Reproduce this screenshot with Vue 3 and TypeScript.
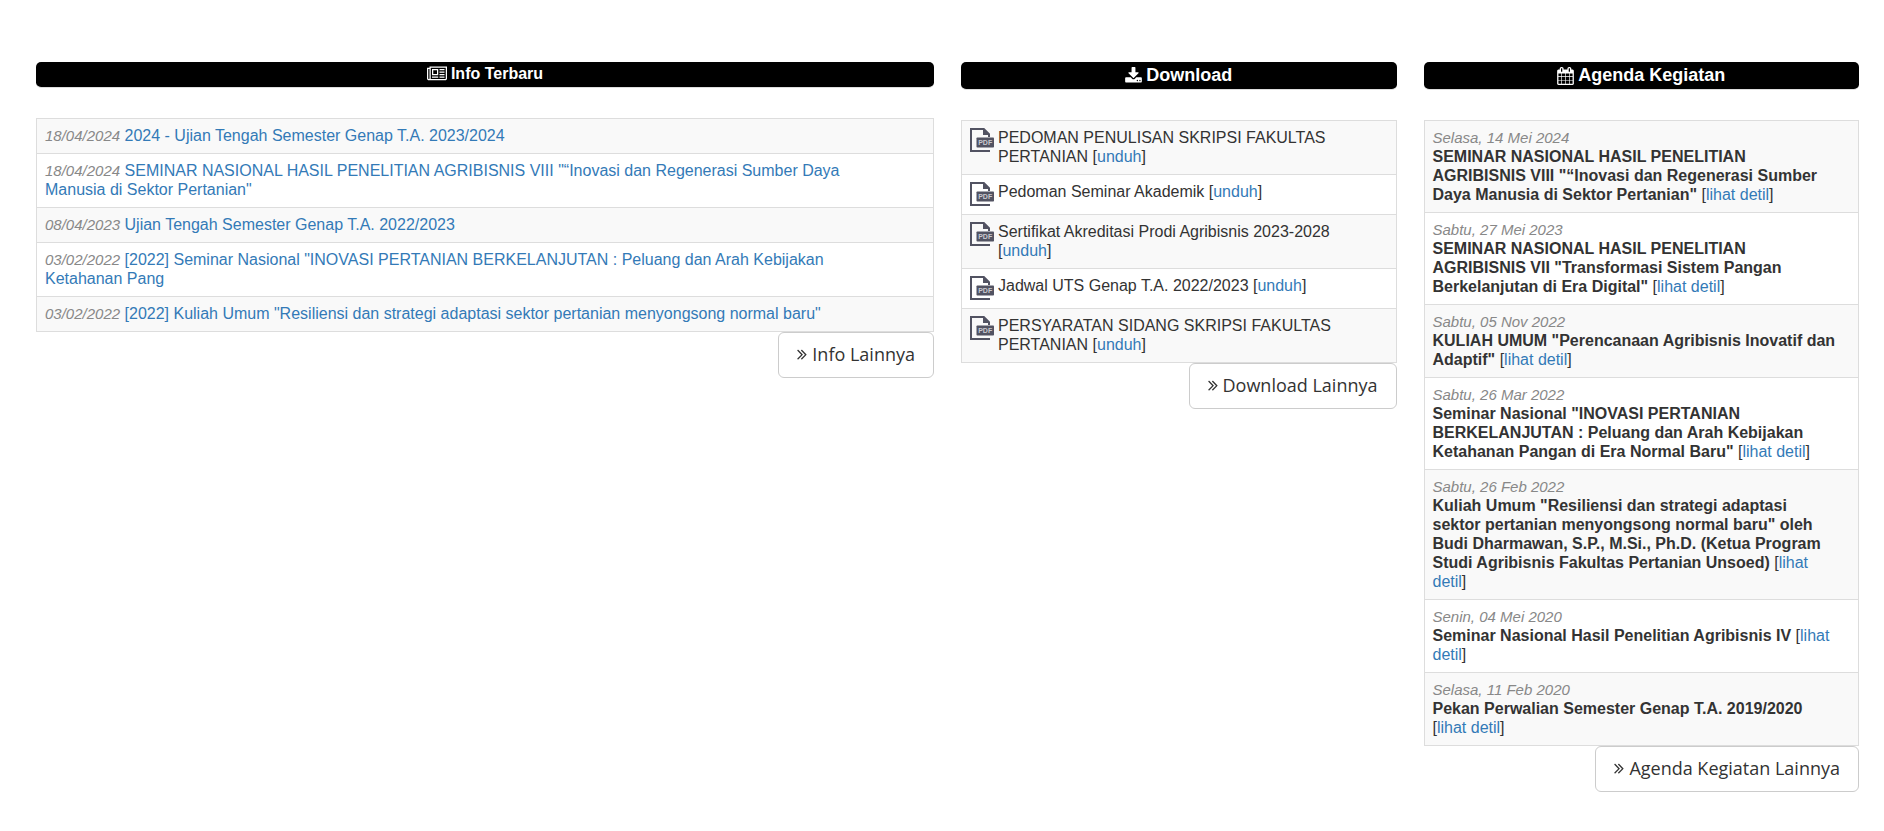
<script setup lang="ts">
interface InfoItem {
  date: string
  title: string
}

interface AgendaItem {
  date: string
  title: string
  link: string
}

const infoItems: InfoItem[] = [
  { date: '18/04/2024', title: '2024 - Ujian Tengah Semester Genap T.A. 2023/2024' },
  {
    date: '18/04/2024',
    title:
      'SEMINAR NASIONAL HASIL PENELITIAN AGRIBISNIS VIII "“Inovasi dan Regenerasi Sumber Daya\nManusia di Sektor Pertanian"',
  },
  { date: '08/04/2023', title: 'Ujian Tengah Semester Genap T.A. 2022/2023' },
  {
    date: '03/02/2022',
    title:
      '[2022] Seminar Nasional "INOVASI PERTANIAN BERKELANJUTAN : Peluang dan Arah Kebijakan\nKetahanan Pang',
  },
  {
    date: '03/02/2022',
    title:
      '[2022] Kuliah Umum "Resiliensi dan strategi adaptasi sektor pertanian menyongsong normal baru"',
  },
]

const downloads: string[] = [
  'PEDOMAN PENULISAN SKRIPSI FAKULTAS PERTANIAN',
  'Pedoman Seminar Akademik',
  'Sertifikat Akreditasi Prodi Agribisnis 2023-2028',
  'Jadwal UTS Genap T.A. 2022/2023',
  'PERSYARATAN SIDANG SKRIPSI FAKULTAS PERTANIAN',
]

const agenda: AgendaItem[] = [
  {
    date: 'Selasa, 14 Mei 2024',
    title:
      'SEMINAR NASIONAL HASIL PENELITIAN\nAGRIBISNIS VIII "“Inovasi dan Regenerasi Sumber\nDaya Manusia di Sektor Pertanian"',
    link: 'lihat detil',
  },
  {
    date: 'Sabtu, 27 Mei 2023',
    title:
      'SEMINAR NASIONAL HASIL PENELITIAN\nAGRIBISNIS VII "Transformasi Sistem Pangan\nBerkelanjutan di Era Digital"',
    link: 'lihat detil',
  },
  {
    date: 'Sabtu, 05 Nov 2022',
    title: 'KULIAH UMUM "Perencanaan Agribisnis Inovatif dan\nAdaptif"',
    link: 'lihat detil',
  },
  {
    date: 'Sabtu, 26 Mar 2022',
    title:
      'Seminar Nasional "INOVASI PERTANIAN\nBERKELANJUTAN : Peluang dan Arah Kebijakan\nKetahanan Pangan di Era Normal Baru"',
    link: 'lihat detil',
  },
  {
    date: 'Sabtu, 26 Feb 2022',
    title:
      'Kuliah Umum "Resiliensi dan strategi adaptasi\nsektor pertanian menyongsong normal baru" oleh\nBudi Dharmawan, S.P., M.Si., Ph.D. (Ketua Program\nStudi Agribisnis Fakultas Pertanian Unsoed)',
    link: 'lihat\ndetil',
  },
  {
    date: 'Senin, 04 Mei 2020',
    title: 'Seminar Nasional Hasil Penelitian Agribisnis IV',
    link: 'lihat\ndetil',
  },
  {
    date: 'Selasa, 11 Feb 2020',
    title: 'Pekan Perwalian Semester Genap T.A. 2019/2020\n',
    link: 'lihat detil',
  },
]

const chevrons =
  'M979 960q0 13-10 23l-466 466q-10 10-23 10t-23-10l-50-50q-10-10-10-23t10-23l393-393-393-393q-10-10-10-23t10-23l50-50q10-10 23-10t23 10l466 466q10 10 10 23zm384 0q0 13-10 23l-466 466q-10 10-23 10t-23-10l-50-50q-10-10-10-23t10-23l393-393-393-393q-10-10-10-23t10-23l50-50q10-10 23-10t23 10l466 466q10 10 10 23z'
</script>

<template>
  <main class="board">
    <section class="col">
      <h4 class="bar bar-small">
        <svg class="icon-news" viewBox="0 0 2048 1792" aria-hidden="true">
          <path d="M1024 512h-384v384h384v-384zm128 640v128h-640v-128h640zm0-768v640h-640v-640h640zm640 768v128h-512v-128h512zm0-256v128h-512v-128h512zm0-256v128h-512v-128h512zm0-256v128h-512v-128h512zm-1536 960v-960h-128v960q0 26 19 45t45 19 45-19 19-45zm1664 0v-1088h-1536v1088q0 33-11 64h1483q26 0 45-19t19-45zm128-1216v1216q0 80-56 136t-136 56h-1664q-80 0-136-56t-56-136v-1088h256v-128h1792z" />
        </svg>
        <span>Info Terbaru</span>
      </h4>
      <ul class="list">
        <li v-for="item in infoItems" :key="item.title" class="row">
          <em class="date">{{ item.date }}</em>{{ ' ' }}<a href="#">{{ item.title }}</a>
        </li>
      </ul>
      <a class="more" href="#">
        <svg class="icon-more" viewBox="372 0 1024 1792" aria-hidden="true"><path :d="chevrons" /></svg>
        <span>Info Lainnya</span>
      </a>
    </section>

    <section class="col">
      <h3 class="bar">
        <svg class="icon-head" viewBox="64 0 1664 1792" aria-hidden="true">
          <path d="M1344 1344q0-26-19-45t-45-19-45 19-19 45 19 45 45 19 45-19 19-45zm256 0q0-26-19-45t-45-19-45 19-19 45 19 45 45 19 45-19 19-45zm128-224v320q0 40-28 68t-68 28h-1472q-40 0-68-28t-28-68v-320q0-40 28-68t68-28h465l135 136q58 56 136 56t136-56l136-136h464q40 0 68 28t28 68zm-325-569q17 41-14 70l-448 448q-18 19-45 19t-45-19l-448-448q-31-29-14-70 17-39 59-39h256v-448q0-26 19-45t45-19h256q26 0 45 19t19 45v448h256q42 0 59 39z" />
        </svg>
        <span>Download</span>
      </h3>
      <ul class="list">
        <li v-for="name in downloads" :key="name" class="row row-file">
          <svg class="icon-pdf" viewBox="0 0 24 24" aria-hidden="true">
            <path class="sheet" d="M19 22V23H1V1H13.8L19 6.2V9" />
            <path class="fold" d="M13 0.4L19.6 7H13Z" />
            <rect class="tag" x="6.5" y="9.5" width="17.5" height="10" rx="0.8" />
            <text class="tag-text" x="15.2" y="17.2">PDF</text>
          </svg>
          <span>{{ name }} [<a href="#">unduh</a>]</span>
        </li>
      </ul>
      <a class="more" href="#">
        <svg class="icon-more" viewBox="372 0 1024 1792" aria-hidden="true"><path :d="chevrons" /></svg>
        <span>Download Lainnya</span>
      </a>
    </section>

    <section class="col">
      <h3 class="bar">
        <svg class="icon-head" viewBox="64 0 1664 1792" aria-hidden="true">
          <path d="M192 1664h288v-288h-288v288zm352 0h320v-288h-320v288zm-352-352h288v-320h-288v320zm352 0h320v-320h-320v320zm-352-384h288v-288h-288v288zm736 736h320v-288h-320v288zm-384-736h320v-288h-320v288zm768 736h288v-288h-288v288zm-384-352h320v-320h-320v320zm-352-864v-288q0-13-9.5-22.5t-22.5-9.5h-64q-13 0-22.5 9.5t-9.5 22.5v288q0 13 9.5 22.5t22.5 9.5h64q13 0 22.5-9.5t9.5-22.5zm736 864h288v-320h-288v320zm-384-384h320v-288h-320v288zm384 0h288v-288h-288v288zm32-480v-288q0-13-9.5-22.5t-22.5-9.5h-64q-13 0-22.5 9.5t-9.5 22.5v288q0 13 9.5 22.5t22.5 9.5h64q13 0 22.5-9.5t9.5-22.5zm384-64v1280q0 52-38 90t-90 38h-1408q-52 0-90-38t-38-90v-1280q0-52 38-90t90-38h128v-96q0-66 47-113t113-47h64q66 0 113 47t47 113v96h384v-96q0-66 47-113t113-47h64q66 0 113 47t47 113v96h128q52 0 90 38t38 90z" />
        </svg>
        <span>Agenda Kegiatan</span>
      </h3>
      <ul class="list">
        <li v-for="item in agenda" :key="item.title" class="row">
          <em class="date date-line">{{ item.date }}</em>
          <strong>{{ item.title }}</strong> [<a href="#">{{ item.link }}</a>]
        </li>
      </ul>
      <a class="more" href="#">
        <svg class="icon-more" viewBox="372 0 1024 1792" aria-hidden="true"><path :d="chevrons" /></svg>
        <span>Agenda Kegiatan Lainnya</span>
      </a>
    </section>
  </main>
</template>

<style>
body {
  margin: 0;
  background: #fff;
}
</style>

<style scoped>
.board {
  display: grid;
  grid-template-columns: 50% 25% 25%;
  align-items: start;
  padding: 62px 12px 38px 22px;
  font-family: "Liberation Sans", Arial, sans-serif;
  font-size: 16px;
  line-height: 19px;
  color: #333;
}

.col {
  display: flex;
  flex-direction: column;
  min-width: 0;
  padding: 0 13px 0 14px;
}

.bar {
  display: flex;
  justify-content: center;
  align-items: center;
  gap: 4px;
  margin: 0 0 30px;
  padding: 2px 0;
  border-bottom: 1px solid #ddd;
  border-radius: 5px;
  background: #000;
  background-clip: padding-box;
  color: #fff;
  font-size: 18px;
  line-height: 23px;
  font-weight: 700;
}

.bar-small {
  padding: 1px 0 3px;
  font-size: 16px;
  line-height: 21px;
}

.bar svg,
.more svg {
  flex: none;
  fill: currentColor;
}

.icon-head {
  width: 17px;
  height: 18px;
}

.icon-news {
  width: 20px;
  height: 18px;
}

.list {
  margin: 0;
  padding: 0;
  border: 1px solid #ddd;
  list-style: none;
}

.row {
  padding: 7px 8px 8px;
  white-space: pre-line;
}

.row + .row {
  border-top: 1px solid #ddd;
}

.row:nth-child(odd) {
  background: #f9f9f9;
}

.row-file {
  display: flex;
  align-items: flex-start;
  gap: 4px;
}

.icon-pdf {
  flex: none;
  width: 24px;
  height: 24px;
}

.sheet {
  fill: none;
  stroke: #525362;
  stroke-width: 2;
}

.fold,
.tag {
  fill: #525362;
}

.tag-text {
  fill: #c8c8ce;
  font-size: 7px;
  font-weight: 700;
  text-anchor: middle;
}

.date {
  color: #888;
  font-size: 15px;
}

.date-line {
  display: block;
}

a {
  color: #337ab7;
  text-decoration: none;
}

.more {
  display: flex;
  align-items: center;
  align-self: flex-end;
  gap: 5px;
  padding: 9px 18px 11px;
  border: 1px solid #ccc;
  border-radius: 6px;
  background: #fff;
  color: #333;
  font-family: "Open Sans", sans-serif;
  font-size: 18px;
  line-height: 24px;
  white-space: nowrap;
}

.icon-more {
  width: 10px;
  height: 18px;
}
</style>
